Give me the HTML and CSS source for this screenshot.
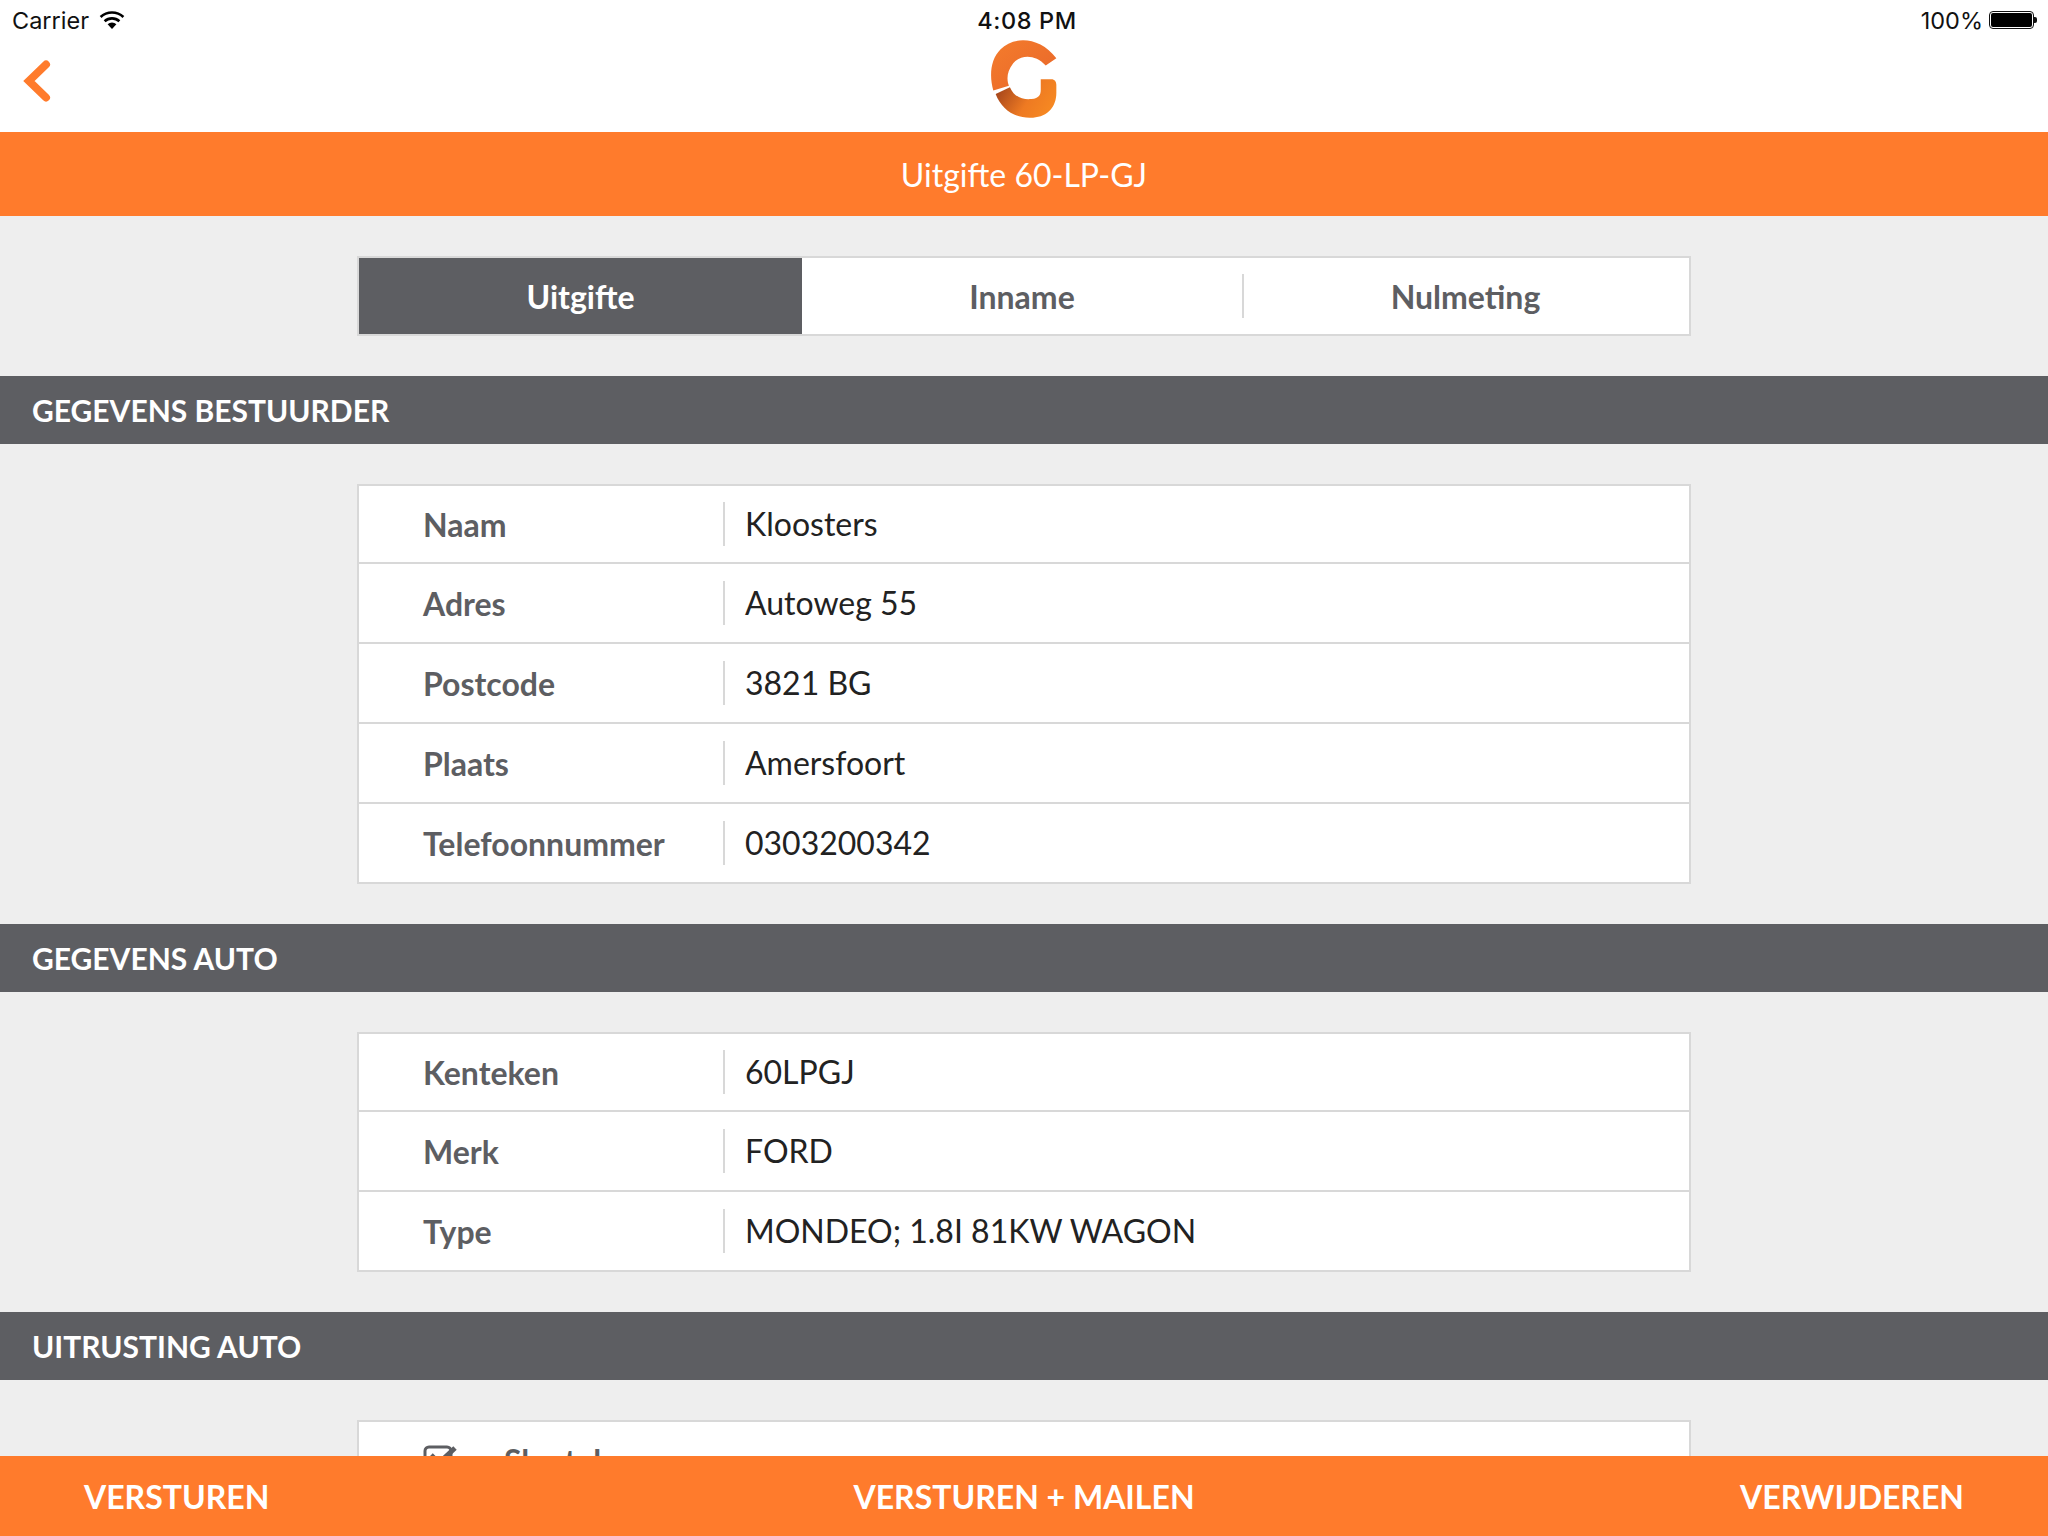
FILE: index.html
```html
<!DOCTYPE html>
<html lang="nl">
<head>
  <meta charset="UTF-8">
  <title>Uitgifte 60-LP-GJ</title>
  <link rel="stylesheet" href="styles.css">
</head>
<body>
<div class="app">

  <!-- Statusbalk -->
  <div class="statusbar">
    <div class="status-left">
      <span class="carrier">Carrier</span>
      <svg class="wifi" viewBox="0 0 26 18" width="26" height="18">
        <path d="M13 18 8.6 13.2a6.6 6.6 0 0 1 8.8 0Z" fill="#000"/>
        <path d="M5.6 10.2a11 11 0 0 1 14.8 0" fill="none" stroke="#000" stroke-width="2.6"/>
        <path d="M1.6 6a16.8 16.8 0 0 1 22.8 0" fill="none" stroke="#000" stroke-width="2.6"/>
      </svg>
    </div>
    <div class="status-time">4:08 PM</div>
    <div class="status-right">
      <span>100%</span>
      <div class="battery"><div class="battery-fill"></div></div>
      <div class="battery-nub"></div>
    </div>
  </div>

  <!-- Navigatie met logo -->
  <div class="navbar">
    <svg class="back" viewBox="0 0 30 44" width="30" height="44">
      <path d="M25 5.5 8 22l17 16.5" fill="none" stroke="#ff7b2c" stroke-width="8" stroke-linecap="round" stroke-linejoin="miter"/>
    </svg>
    <svg class="logo" viewBox="90 115 205 245" width="68" height="82">
      <defs>
        <linearGradient id="logoTop" x1="0" y1="0" x2="1" y2="1">
          <stop offset="0" stop-color="#f47c2c"/>
          <stop offset="1" stop-color="#e8662a"/>
        </linearGradient>
        <linearGradient id="logoBottom" x1="0" y1="0.3" x2="1" y2="0.7">
          <stop offset="0" stop-color="#a3441c"/>
          <stop offset="0.55" stop-color="#ee7a22"/>
          <stop offset="1" stop-color="#f78a22"/>
        </linearGradient>
      </defs>
      <path d="M100 272C88 230 90 180 122 148c38-40 118-40 168 27l-32 22c-33-37-78-32-98-7-20 25-20 50-13 68Z" fill="url(#logoTop)"/>
      <path d="M107 283l43-21c15 33 40 38 65 36 23-2 28-13 28-28v-32h32c10 0 15 7 15 17v25c0 40-25 72-70 74-55 4-95-24-113-71Z" fill="url(#logoBottom)"/>
    </svg>
  </div>

  <div class="titlebar">Uitgifte 60-LP-GJ</div>

  <div class="content">
    <div class="tabs">
      <div class="tab tab-active">Uitgifte</div>
      <div class="tab">Inname</div>
      <div class="tab tab-last">Nulmeting</div>
    </div>

    <div class="section-bar">GEGEVENS BESTUURDER</div>
    <div class="table">
      <div class="row"><div class="row-label">Naam</div><div class="row-value">Kloosters</div></div>
      <div class="row"><div class="row-label">Adres</div><div class="row-value">Autoweg 55</div></div>
      <div class="row"><div class="row-label">Postcode</div><div class="row-value">3821 BG</div></div>
      <div class="row"><div class="row-label">Plaats</div><div class="row-value">Amersfoort</div></div>
      <div class="row"><div class="row-label">Telefoonnummer</div><div class="row-value">0303200342</div></div>
    </div>

    <div class="section-bar">GEGEVENS AUTO</div>
    <div class="table">
      <div class="row"><div class="row-label">Kenteken</div><div class="row-value">60LPGJ</div></div>
      <div class="row"><div class="row-label">Merk</div><div class="row-value">FORD</div></div>
      <div class="row"><div class="row-label">Type</div><div class="row-value">MONDEO; 1.8I 81KW WAGON</div></div>
    </div>

    <div class="section-bar">UITRUSTING AUTO</div>
    <div class="table">
      <div class="row check-row">
        <svg class="check" viewBox="0 0 34 34" width="34" height="34">
          <rect x="2" y="4" width="26" height="26" rx="4" fill="none" stroke="#5d5e62" stroke-width="3"/>
          <path d="M8 12l8 8L32 5" fill="none" stroke="#5d5e62" stroke-width="5"/>
        </svg>
        <span class="check-label">Sleutels</span>
      </div>
    </div>
  </div>

  <div class="footer">
    <span>VERSTUREN</span>
    <span>VERSTUREN + MAILEN</span>
    <span class="footer-right">VERWIJDEREN</span>
  </div>
</div>
</body>
</html>
```

FILE: styles.css
```css
body {
  margin: 0;
  font-family: Lato, "Liberation Sans", sans-serif;
  background: #eeeeee;
}

.app {
  width: 2048px;
  height: 1536px;
  display: flex;
  flex-direction: column;
  overflow: hidden;
}

/* Statusbalk */
.statusbar {
  height: 40px;
  flex: none;
  background: #fff;
  display: grid;
  grid-template-columns: 1fr auto 1fr;
  align-items: center;
  padding: 0 11px 0 12px;
  font-family: Inter, sans-serif;
  font-size: 23.5px;
  color: #111;
}

.status-left {
  display: flex;
  align-items: center;
  gap: 10px;
}

.status-time {
  font-weight: 500;
  letter-spacing: 0.6px;
  padding-left: 5px;
}

.status-right {
  display: flex;
  align-items: center;
  justify-content: flex-end;
  gap: 6px;
}

.battery {
  width: 45px;
  height: 18px;
  box-sizing: border-box;
  border: 1px solid #111;
  border-radius: 4px;
  padding: 1px;
}

.battery-fill {
  height: 100%;
  background: #000;
  border-radius: 2px;
}

.battery-nub {
  width: 3px;
  height: 6px;
  margin-left: -6px;
  background: #111;
  border-radius: 0 2px 2px 0;
}

/* Navigatie */
.navbar {
  height: 92px;
  box-sizing: border-box;
  padding: 0 0 12px 21px;
  flex: none;
  background: #fff;
  display: grid;
  grid-template-columns: 1fr auto 1fr;
  grid-template-rows: 80px;
  align-items: center;
}

.back {
  margin-top: 2px;
}

.logo {
  margin: 0 0 2px -21px;
}

.titlebar {
  height: 84px;
  flex: none;
  background: #ff7b2c;
  color: #fff;
  font-size: 32px;
  display: flex;
  align-items: center;
  justify-content: center;
}

.content {
  flex: 1;
  min-height: 0;
  overflow: hidden;
}

/* Tabs */
.tabs {
  width: 1334px;
  height: 80px;
  box-sizing: border-box;
  margin: 40px auto;
  display: grid;
  grid-template-columns: 443px 440px 1fr;
  background: #fff;
  border: 2px solid #d8d8d8;
}

.tab {
  display: flex;
  align-items: center;
  justify-content: center;
  font-size: 32px;
  font-weight: 700;
  color: #5d5e62;
  position: relative;
}

.tab-active {
  background: #5d5e62;
  color: #fff;
}

.tab-last::before {
  content: "";
  position: absolute;
  left: 0;
  top: 16px;
  bottom: 16px;
  width: 2px;
  background: #d8d8d8;
}

/* Secties */
.section-bar {
  height: 68px;
  background: #5d5e62;
  color: #fff;
  font-size: 30px;
  font-weight: 700;
  display: flex;
  align-items: center;
  padding-left: 32px;
}

.table {
  width: 1334px;
  box-sizing: border-box;
  margin: 40px auto;
  background: #fff;
  border: 2px solid #d8d8d8;
}

.row {
  height: 78px;
  display: flex;
  align-items: center;
  border-top: 2px solid #d8d8d8;
}

.row:first-child {
  height: 76px;
  border-top: 0;
}

.row-label {
  width: 300px;
  padding-left: 64px;
  font-size: 32px;
  font-weight: 700;
  color: #5d5e62;
}

.row-value {
  height: 44px;
  line-height: 44px;
  border-left: 2px solid #d8d8d8;
  padding-left: 20px;
  font-size: 32px;
  color: #222;
}

.check-row {
  gap: 47px;
  padding-left: 64px;
  font-size: 32px;
  font-weight: 700;
  color: #5d5e62;
}

/* Knoppen onderaan */
.footer {
  height: 80px;
  flex: none;
  background: #ff7b2c;
  color: #fff;
  font-size: 32px;
  font-weight: 700;
  display: grid;
  grid-template-columns: 1fr auto 1fr;
  align-items: center;
  padding: 0 84px;
}

.footer-right {
  text-align: right;
}
```
